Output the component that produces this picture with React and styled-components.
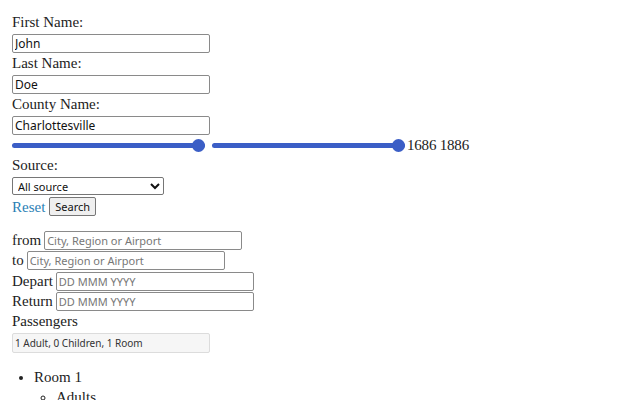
import React from "react";
import styled, { createGlobalStyle } from "styled-components";

const GlobalStyle = createGlobalStyle`
  body {
    margin: 0;
    padding: 12px 12px 0 12px;
    background: #fff;
    color: #222;
    font-family: "Liberation Serif", "Times New Roman", serif;
    font-size: 15px;
  }
`;

const Form = styled.form`
  display: flex;
  flex-direction: column;
  align-items: flex-start;
`;

const Label = styled.label`
  display: block;
  line-height: 20px;
`;

const TextInput = styled.input`
  box-sizing: border-box;
  width: 198px;
  height: 19px;
  margin: 2px 0 0 0;
  padding: 0 2px;
  border: 1px solid #8a8a8a;
  border-radius: 2px;
  font-family: "Noto Sans", "Open Sans", sans-serif;
  font-size: ${({ $size }) => $size || 11}px;
  color: #111;
  background: ${({ $muted }) => ($muted ? "#f6f6f6" : "#fff")};
  border-color: ${({ $muted }) => ($muted ? "#dcdcdc" : "#8a8a8a")};
  &::placeholder {
    color: #777;
  }
`;

const SliderRow = styled.div`
  display: flex;
  align-items: center;
  height: 20px;
  gap: 7px;
`;

const Range = styled.input`
  -webkit-appearance: none;
  appearance: none;
  width: 193px;
  height: 13px;
  margin: 0;
  background: transparent;
  &::-webkit-slider-runnable-track {
    height: 5px;
    border-radius: 3px;
    background: #3b5ec6;
  }
  &::-webkit-slider-thumb {
    -webkit-appearance: none;
    width: 13px;
    height: 13px;
    margin-top: -4px;
    border-radius: 50%;
    background: #3b5ec6;
  }
`;

const RangeText = styled.span`
  margin-left: -5px;
  line-height: 20px;
  letter-spacing: -0.2px;
`;

const Select = styled.select`
  box-sizing: border-box;
  width: 152px;
  height: 18px;
  margin-top: 2px;
  padding: 0 1px;
  border: 1px solid #767676;
  border-radius: 2px;
  font-family: "Noto Sans", "Open Sans", sans-serif;
  font-size: 11px;
  color: #111;
  background: #fff;
`;

const ActionRow = styled.div`
  display: flex;
  align-items: center;
  gap: 4px;
  height: 21px;
  margin-top: 1px;
`;

const ResetLink = styled.a`
  color: #2b7fb5;
  text-decoration: none;
  line-height: 20px;
`;

const Button = styled.button`
  box-sizing: border-box;
  height: 19px;
  padding: 0 5px;
  border: 1px solid #767676;
  border-radius: 2px;
  background: #efefef;
  font-family: "Noto Sans", "Open Sans", sans-serif;
  font-size: 11px;
  color: #111;
`;

const TripBlock = styled.div`
  display: flex;
  flex-direction: column;
  margin-top: 13px;
`;

const TripRow = styled.div`
  display: flex;
  align-items: center;
  gap: 3px;
  height: 20px;
  margin-bottom: ${({ $gap }) => $gap || 0}px;
  & > input {
    margin: 0;
  }
`;

const PassengerInput = styled(TextInput)`
  height: 20px;
  color: #333;
`;

const List = styled.ul`
  margin: 14px 0 0 0;
  padding-left: 22px;
  line-height: 20px;
`;

const SubList = styled.ul`
  margin: 0;
  padding-left: 22px;
  list-style-type: circle;
`;

export default function App() {
  return (
    <>
      <GlobalStyle />
      <Form onSubmit={(e) => e.preventDefault()}>
        <Label>First Name:</Label>
        <TextInput $size={12} defaultValue="John" />
        <Label>Last Name:</Label>
        <TextInput $size={12} defaultValue="Doe" />
        <Label>County Name:</Label>
        <TextInput $size={12} defaultValue="Charlottesville" />
        <SliderRow>
          <Range type="range" min="1686" max="1886" defaultValue="1886" />
          <Range type="range" min="1686" max="1886" defaultValue="1886" />
          <RangeText>1686 1886</RangeText>
        </SliderRow>
        <Label>Source:</Label>
        <Select defaultValue="all">
          <option value="all">All source</option>
        </Select>
        <ActionRow>
          <ResetLink href="#">Reset</ResetLink>
          <Button type="submit">Search</Button>
        </ActionRow>
        <TripBlock>
          <TripRow>
            from <TextInput placeholder="City, Region or Airport" />
          </TripRow>
          <TripRow $gap={1}>
            to <TextInput placeholder="City, Region or Airport" />
          </TripRow>
          <TripRow>
            Depart <TextInput placeholder="DD MMM YYYY" />
          </TripRow>
          <TripRow>
            Return <TextInput placeholder="DD MMM YYYY" />
          </TripRow>
        </TripBlock>
        <Label>Passengers</Label>
        <PassengerInput
          $muted
          $size={10}
          readOnly
          value="1 Adult, 0 Children, 1 Room"
        />
      </Form>
      <List>
        <li>
          Room 1
          <SubList>
            <li>Adults</li>
          </SubList>
        </li>
      </List>
    </>
  );
}
